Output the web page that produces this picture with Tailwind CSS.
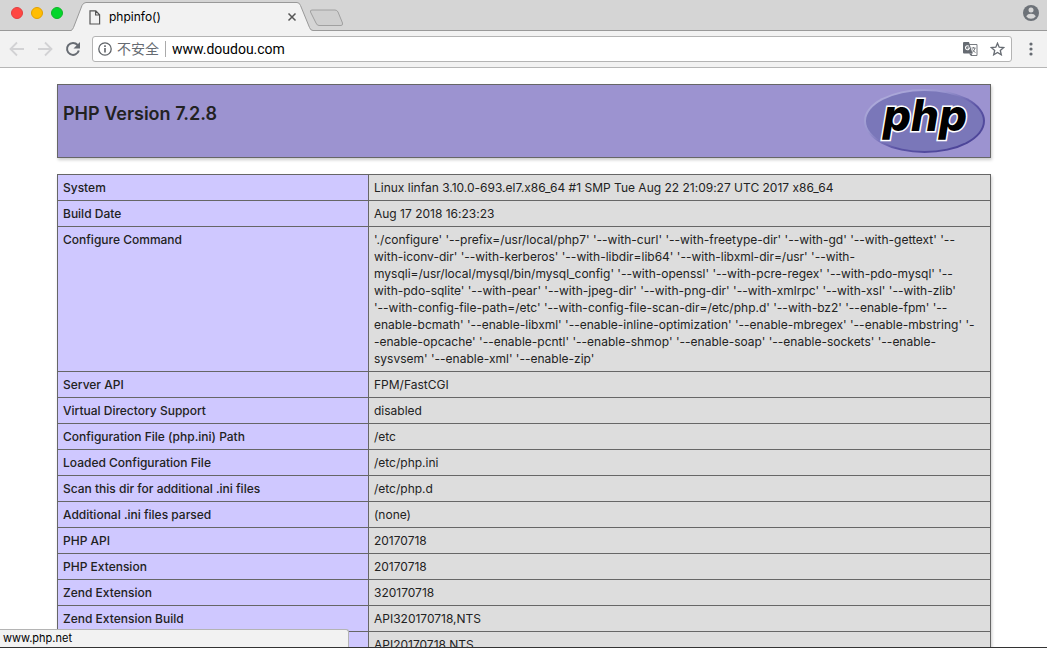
<!DOCTYPE html>
<html lang="en">
<head>
<meta charset="utf-8">
<title>phpinfo()</title>
<script src="https://cdn.jsdelivr.net/npm/@tailwindcss/browser@4"></script>
</head>
<body class="relative flex h-screen flex-col overflow-hidden border-b border-[#333] bg-white font-['Inter','Noto_Sans_CJK_SC',sans-serif] text-xs leading-[17px] text-[#222] [font-feature-settings:'calt'_0]">

<header class="shrink-0">
  <div class="flex h-[31px] border-b border-[#999] bg-[#d5d5d5]">
    <div class="flex items-start gap-2 pt-[7px] pl-[11px]">
      <button aria-label="Close window" class="size-3 rounded-full border border-[#e33e41] bg-[#ff4743]"></button>
      <button aria-label="Minimize window" class="size-3 rounded-full border border-[#e2a100] bg-[#ffbd04]"></button>
      <button aria-label="Zoom window" class="size-3 rounded-full border border-[#10b528] bg-[#04d62c]"></button>
    </div>
    <div class="relative ml-2 flex h-[31px] w-[242px] items-center pr-[16px] pl-[18px]">
      <svg class="absolute inset-0" width="242" height="31" viewBox="0 0 242 31" aria-hidden="true">
        <path d="M0 31 V30.500 Q1.500 30 2.500 27.500 L11 5.500 Q12.500 2.500 15 2.500 H226 Q228.500 2.500 229.500 5.500 L238.500 27.500 Q239.500 30.500 242 30.500 V31 Z" fill="#f2f2f2"/>
        <path d="M0 30.500 Q1.500 30 2.500 27.500 L11 5.500 Q12.500 2.500 15 2.500 H226 Q228.500 2.500 229.500 5.500 L238.500 27.500 Q239.500 30.500 242 30.500" fill="none" stroke="#999"/>
      </svg>
      <svg class="relative mt-[3px]" width="12" height="15" viewBox="0 0 12 15" fill="none" stroke="#555" stroke-width="1.200" aria-hidden="true"><path d="M1 .8H6.800L10.600 4.800V14H1Z M6.600 1V5H10.600"/></svg>
      <span class="relative mt-[2px] ml-2 grow text-black">phpinfo()</span>
      <button aria-label="Close tab" class="relative mt-[3px]"><svg width="10" height="10" viewBox="0 0 10 10" stroke="#555" stroke-width="1.500"><path d="M1.500 1.500 8.500 8.500M8.500 1.500 1.500 8.500"/></svg></button>
    </div>
    <button aria-label="New tab" class="-ml-1 self-start pt-[9px]"><svg width="35" height="18" viewBox="0 0 35 18"><path d="M3 1H26Q28 1 29 3L33.500 14Q34 16.500 32 16.500H10Q8 16.500 7 14L1.500 3Q1 1 3 1Z" fill="#cfcfcf" stroke="#a0a0a0"/></svg></button>
    <button aria-label="Profile" class="mr-2 ml-auto self-start pt-[5px]"><svg width="16" height="16" viewBox="0 0 16 16"><circle cx="8" cy="8" r="8" fill="#6d7278"/><circle cx="8" cy="5" r="2.500" fill="#d8d8d8"/><path d="M3.200 11.200Q4.500 8.800 8 8.800T12.800 11.200Q11 13.700 8 13.700T3.200 11.200Z" fill="#d8d8d8"/></svg></button>
  </div>

  <div class="flex h-[37px] items-center border-b border-[#b6b6b6] bg-[#f2f2f2] pl-[9px]">
    <button aria-label="Back"><svg width="16" height="16" viewBox="0 0 16 16" fill="none" stroke="#d2d2d4" stroke-width="1.800"><path d="M15 8H2M8 1.500 1.500 8 8 14.500"/></svg></button>
    <button aria-label="Forward" class="ml-3"><svg width="16" height="16" viewBox="0 0 16 16" fill="none" stroke="#d2d2d4" stroke-width="1.800"><path d="M1 8H14M8 1.500 14.500 8 8 14.500"/></svg></button>
    <button aria-label="Reload" class="ml-3"><svg width="16" height="16" viewBox="0 0 16 16"><path d="M13.800 9.500A6 6 0 1 1 12.600 4" fill="none" stroke="#666b72" stroke-width="2"/><path d="M15 1V7.500H8.500Z" fill="#666b72"/></svg></button>
    <form class="ml-[11px] flex h-[26px] min-w-0 grow items-center rounded-[3px] border border-[#b4b4b4] bg-white">
      <svg class="ml-[5px] shrink-0" width="14" height="14" viewBox="0 0 14 14" aria-hidden="true"><circle cx="7" cy="7" r="6.200" fill="none" stroke="#5f6368" stroke-width="1.300"/><path d="M6.200 6H7.800V10.500H6.200ZM6.200 3.300H7.800V4.900H6.200Z" fill="#5f6368"/></svg>
      <label for="url" class="ml-[5px] shrink-0 text-sm text-[#666b72]">不安全</label>
      <span class="ml-[6px] h-4 w-px shrink-0 bg-[#aaa]"></span>
      <input id="url" type="text" value="www.doudou.com" class="ml-[6px] min-w-0 grow font-['Roboto',sans-serif] text-sm text-black outline-none">
      <button type="button" aria-label="Translate this page"><svg width="15" height="15" viewBox="0 0 15 15"><path d="M6 2.500H14V13.500H8" fill="#fff" stroke="#777b80"/><path d="M0 1Q0 0 1 0H6L9.500 11.500H1Q0 11.500 0 10.500Z" fill="#666b72"/><path d="M6 11.500H9.500L8 14Z" fill="#666b72"/><path d="M6 4.400A2 2 0 1 0 6.500 6H4.500" fill="none" stroke="#fff" stroke-width="1.100"/><path d="M8.500 6H12.500M10.500 5V6M12 6Q11.500 9 9 10.500M9.500 7.500Q10.500 9.500 12.500 10.500" fill="none" stroke="#777b80"/></svg></button>
      <button type="button" aria-label="Bookmark this page" class="mr-[6px] ml-3"><svg width="15" height="14" viewBox="0 0 15 14"><path d="M7.500 1.200 9.200 5.200 13.700 5.600 10.300 8.500 11.300 12.800 7.500 10.500 3.700 12.800 4.700 8.500 1.300 5.600 5.800 5.200Z" fill="none" stroke="#666b72" stroke-width="1.300"/></svg></button>
    </form>
    <button aria-label="Menu" class="mr-[14px] ml-[17px]"><svg width="4" height="14" viewBox="0 0 4 14" fill="#666b72"><circle cx="2" cy="2" r="1.600"/><circle cx="2" cy="7" r="1.600"/><circle cx="2" cy="12" r="1.600"/></svg></button>
  </div>
</header>

<main class="flex min-h-0 grow flex-col gap-4 overflow-hidden pt-4 pr-14 pl-[57px]">
  <section class="flex shrink-0 items-start justify-between border border-[#666] bg-[#9c93d0] px-[5px] py-1 shadow-[1px_2px_3px_#ccc]">
    <h1 class="pt-[14px] text-lg leading-[22px] font-semibold">PHP Version 7.2.8</h1>
    <a href="http://www.php.net/" aria-label="PHP home page">
      <svg class="overflow-visible" width="121" height="64" viewBox="0 0 121 64">
        <defs><linearGradient id="rim" x1="0" y1="0" x2="1" y2="1"><stop offset="0" stop-color="#b9b7e0"/><stop offset=".35" stop-color="#9a96d0"/><stop offset=".6" stop-color="#5a53a4"/><stop offset="1" stop-color="#443c91"/></linearGradient></defs>
        <ellipse cx="60.500" cy="32" rx="60.500" ry="32" fill="url(#rim)"/>
        <ellipse cx="60.500" cy="32" rx="58.500" ry="30" fill="#7a77b9"/>
        <text x="19" y="42" font-family="Inter" font-weight="800" font-style="italic" font-size="44" fill="#000" stroke="#fff" stroke-width="3" paint-order="stroke">php</text>
      </svg>
    </a>
  </section>

  <table class="w-full shrink-0 table-fixed border-collapse bg-[#ddd] text-left shadow-[1px_2px_3px_#ccc] [&_td]:border [&_td]:border-[#666] [&_td]:px-[5px] [&_td]:py-1 [&_td]:align-baseline [&_th]:w-1/3 [&_th]:border [&_th]:border-[#666] [&_th]:bg-[#cfc8ff] [&_th]:px-[5px] [&_th]:py-1 [&_th]:align-baseline [&_th]:font-medium">
    <tbody>
      <tr><th scope="row">System</th><td>Linux linfan 3.10.0-693.el7.x86_64 #1 SMP Tue Aug 22 21:09:27 UTC 2017 x86_64</td></tr>
      <tr><th scope="row">Build Date</th><td>Aug 17 2018 16:23:23</td></tr>
      <tr><th scope="row">Configure Command</th><td class="whitespace-nowrap">'./configure' '--prefix=/usr/local/php7' '--with-curl' '--with-freetype-dir' '--with-gd' '--with-gettext' '--<br>with-iconv-dir' '--with-kerberos' '--with-libdir=lib64' '--with-libxml-dir=/usr' '--with-<br>mysqli=/usr/local/mysql/bin/mysql_config' '--with-openssl' '--with-pcre-regex' '--with-pdo-mysql' '--<br>with-pdo-sqlite' '--with-pear' '--with-jpeg-dir' '--with-png-dir' '--with-xmlrpc' '--with-xsl' '--with-zlib'<br>'--with-config-file-path=/etc' '--with-config-file-scan-dir=/etc/php.d' '--with-bz2' '--enable-fpm' '--<br>enable-bcmath' '--enable-libxml' '--enable-inline-optimization' '--enable-mbregex' '--enable-mbstring' '-<br>-enable-opcache' '--enable-pcntl' '--enable-shmop' '--enable-soap' '--enable-sockets' '--enable-<br>sysvsem' '--enable-xml' '--enable-zip'</td></tr>
      <tr><th scope="row">Server API</th><td>FPM/FastCGI</td></tr>
      <tr><th scope="row">Virtual Directory Support</th><td>disabled</td></tr>
      <tr><th scope="row">Configuration File (php.ini) Path</th><td>/etc</td></tr>
      <tr><th scope="row">Loaded Configuration File</th><td>/etc/php.ini</td></tr>
      <tr><th scope="row">Scan this dir for additional .ini files</th><td>/etc/php.d</td></tr>
      <tr><th scope="row">Additional .ini files parsed</th><td>(none)</td></tr>
      <tr><th scope="row">PHP API</th><td>20170718</td></tr>
      <tr><th scope="row">PHP Extension</th><td>20170718</td></tr>
      <tr><th scope="row">Zend Extension</th><td>320170718</td></tr>
      <tr><th scope="row">Zend Extension Build</th><td>API320170718,NTS</td></tr>
      <tr><th scope="row">PHP Extension Build</th><td>API20170718,NTS</td></tr>
    </tbody>
  </table>
</main>

<div role="status" class="absolute bottom-0 left-0 h-[18px] w-1/3 rounded-tr-[3px] border-t border-r border-[#b4b4b4] bg-[#f2f2f2] pl-[3px] text-[11px] text-black">www.php.net</div>
</body>
</html>
